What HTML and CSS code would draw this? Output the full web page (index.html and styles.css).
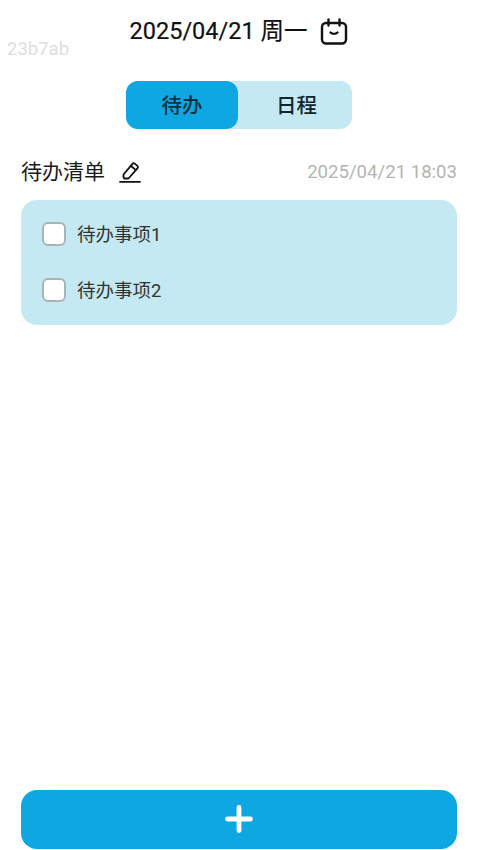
FILE: index.html
```html
<!DOCTYPE html>
<html lang="zh">
<head>
<meta charset="utf-8">
<title>待办</title>
<link rel="stylesheet" href="styles.css">
</head>
<body>
<div class="app">
  <header class="header">
    <span class="device-id">23b7ab</span>
    <h1 class="date">2025/04/21 周一</h1>
    <svg class="cal-icon" viewBox="0 0 28 28" fill="none" stroke="#111" stroke-width="2.400" stroke-linecap="round" stroke-linejoin="round">
      <rect x="2" y="5" width="24" height="20.500" rx="4"/>
      <path d="M8.500 1.500v6M19.500 1.500v6"/>
      <path d="M10.500 14.500c1.800 1.800 5.200 1.800 7 0"/>
    </svg>
  </header>
  <nav class="tabs">
    <div class="tab tab-active">待办</div>
    <div class="tab tab-plain">日程</div>
  </nav>
  <section class="list-head">
    <div class="list-title">
      <span>待办清单</span>
      <svg class="edit-icon" viewBox="0 0 22 22" fill="none" stroke="#111" stroke-width="1.800" stroke-linecap="round" stroke-linejoin="round">
        <path d="M4.500 13.500 13.500 2.800c.6-.7 1.500-.8 2.200-.2l2.700 2.300c.7.600.8 1.500.2 2.200L9.500 17.500H5.200c-.7-1.200-1.100-2.600-.7-4Z"/>
        <path d="M11.800 4.800l4.800 4.100"/>
        <path d="M1 20.800h20"/>
      </svg>
    </div>
    <span class="timestamp">2025/04/21 18:03</span>
  </section>
  <section class="card">
    <label class="item"><span class="box"></span><span class="item-text">待办事项1</span></label>
    <label class="item"><span class="box"></span><span class="item-text">待办事项2</span></label>
  </section>
  <div class="spacer"></div>
  <button class="add" type="button" aria-label="添加">
    <svg class="plus" viewBox="0 0 28 28" fill="none" stroke="#fff" stroke-width="4.800" stroke-linecap="round">
      <path d="M14 2.500v23M2.500 14h23"/>
    </svg>
  </button>
</div>
</body>
</html>
```

FILE: styles.css
```css
* { box-sizing: border-box; }
html, body { margin: 0; padding: 0; background: #fff; }
body {
  width: 478px;
  height: 850px;
  overflow: hidden;
  font-family: Roboto, "Noto Sans CJK SC", sans-serif;
  color: #111;
}
.app {
  height: 850px;
  display: flex;
  flex-direction: column;
  padding: 0 21px 1px;
}
.header {
  position: relative;
  height: 81px;
  display: flex;
  justify-content: center;
  align-items: flex-start;
  gap: 13px;
  padding: 17px 0 0;
}
.device-id {
  position: absolute;
  left: -14px;
  top: 38px;
  font-size: 18.500px;
  line-height: 22px;
  color: #dedede;
}
.date {
  margin: 0;
  font-size: 23.500px;
  line-height: 28px;
  font-weight: 400;
  -webkit-text-stroke: 0.2px #111;
}
.cal-icon { width: 28px; height: 28px; margin-top: 1px; }
.tabs {
  align-self: center;
  width: 226px;
  height: 48px;
  display: flex;
  background: #c4e9f2;
  border-radius: 12px;
}
.tab {
  flex: 1;
  display: flex;
  align-items: center;
  justify-content: center;
  font-size: 20.500px;
  font-weight: 500;
  color: #10262e;
  border-radius: 12px;
  padding-bottom: 2px;
}
.tab-plain { padding-left: 3px; }
.tab-active { flex: 0 0 112px; background: #0ea7e2; color: #06303f; }
.list-head {
  display: flex;
  align-items: center;
  justify-content: space-between;
  height: 36px;
  margin-top: 25px;
}
.list-title {
  display: flex;
  align-items: center;
  gap: 14px;
  font-size: 21px;
  line-height: 26px;
  color: #1a1a1a;
  padding-bottom: 1px;
}
.edit-icon { width: 22px; height: 22px; }
.timestamp { font-size: 18.600px; color: #b4b4b4; }
.card {
  margin-top: 10px;
  height: 125px;
  background: #c4e9f2;
  border-radius: 16px;
  padding: 6px 21px;
  display: flex;
  flex-direction: column;
}
.item {
  height: 56px;
  display: flex;
  align-items: center;
  gap: 11px;
  font-size: 18.500px;
  line-height: 22px;
  color: #333;
}
.item-text { padding-top: 2px; }
.box {
  width: 24px;
  height: 24px;
  background: #fff;
  border: 2px solid #a9b4b7;
  border-radius: 6px;
}
.spacer { flex: 1; }
.add {
  height: 59px;
  border: 0;
  padding: 0 0 2px;
  border-radius: 16px;
  background: #0ea7e2;
  display: flex;
  align-items: center;
  justify-content: center;
}
.plus { width: 28px; height: 28px; }
```
